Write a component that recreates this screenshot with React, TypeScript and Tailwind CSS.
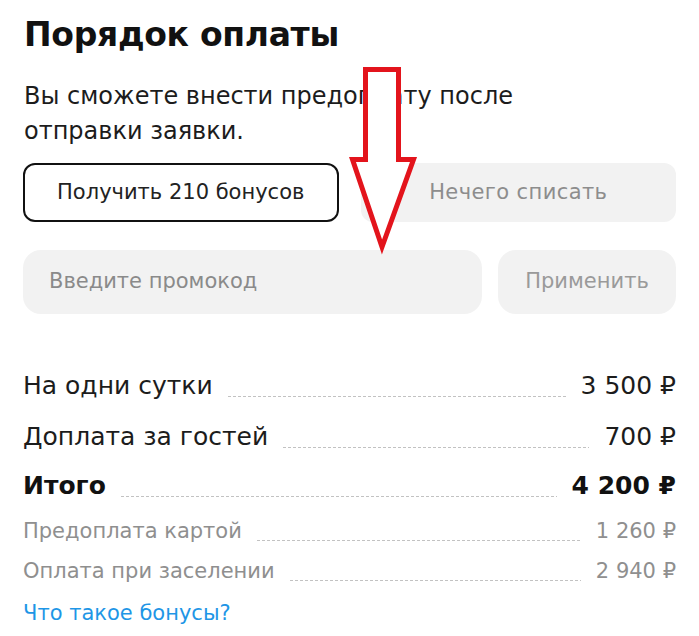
import React from "react";

const font = { fontFamily: "'DejaVu Sans', Inter, sans-serif" };

function Row({
  label,
  value,
  variant,
  h,
}: {
  label: string;
  value: string;
  variant: "normal" | "bold" | "muted";
  h: string;
}) {
  const text =
    variant === "bold"
      ? "text-[25px] leading-[32px] font-bold text-[#111]"
      : variant === "muted"
      ? "text-[21px] leading-[28px] text-[#8f8f8f]"
      : "text-[25px] leading-[32px] text-[#1c1c1c]";
  return (
    <div className={`flex items-baseline ${h} ${text}`}>
      <span className="whitespace-nowrap">{label}</span>
      <span className="mx-[15px] h-px flex-1 translate-y-[3px] bg-[linear-gradient(to_right,#c2c2c2_55%,transparent_55%)] bg-[length:5px_1px] bg-repeat-x" />
      <span className="whitespace-nowrap">{value}</span>
    </div>
  );
}

export default function App() {
  return (
    <div className="relative w-[699px] h-[636px] overflow-hidden bg-white" style={font}>
      <div className="flex flex-col px-[23px] pt-[13px]">
        <h1 className="text-[33px] leading-[44px] font-bold tracking-[-0.3px] text-[#111] pl-px">
          Порядок оплаты
        </h1>
        <p className="mt-[22px] text-[24px] leading-[35px] text-[#1c1c1c] pl-px w-[560px]">
          Вы сможете внести предоплату после отправки заявки.
        </p>
        <div className="mt-[14px] grid grid-cols-2 gap-[22px]">
          <button className="h-[59px] rounded-[12px] border-2 border-[#111] text-[21px] text-[#222] bg-white">
            Получить 210 бонусов
          </button>
          <button className="h-[59px] rounded-[12px] bg-[#f2f2f2] text-[21px] tracking-[0.4px] text-[#8d8d8d]">
            Нечего списать
          </button>
        </div>
        <div className="mt-[28px] flex gap-[16px]">
          <div className="flex h-[64px] flex-1 items-center rounded-[18px] bg-[#f2f2f2] pl-[26px] text-[21px] text-[#8a8a8a]">
            Введите промокод
          </div>
          <button className="h-[64px] w-[178px] rounded-[18px] bg-[#f2f2f2] text-[21px] text-[#9a9a9a]">
            Применить
          </button>
        </div>
        <div className="mt-[56px] flex flex-col">
          <Row label="На одни сутки" value="3 500 ₽" variant="normal" h="h-[51px]" />
          <Row label="Доплата за гостей" value="700 ₽" variant="normal" h="h-[49px]" />
          <Row label="Итого" value="4 200 ₽" variant="bold" h="h-[47px]" />
          <Row label="Предоплата картой" value="1 260 ₽" variant="muted" h="h-[40px]" />
          <Row label="Оплата при заселении" value="2 940 ₽" variant="muted" h="h-[42px]" />
          <a className="text-[21px] leading-[28px] text-[#1e96e6]">Что такое бонусы?</a>
        </div>
      </div>
      <svg
        className="absolute left-0 top-0 pointer-events-none"
        width="699"
        height="636"
        viewBox="0 0 699 636"
      >
        <path
          d="M365.5 69.5 H398.5 V159.5 H413.5 L382 247 L352.5 159.5 H365.5 Z"
          fill="white"
          stroke="#e3141c"
          strokeWidth="5"
          strokeLinejoin="miter"
        />
      </svg>
    </div>
  );
}
